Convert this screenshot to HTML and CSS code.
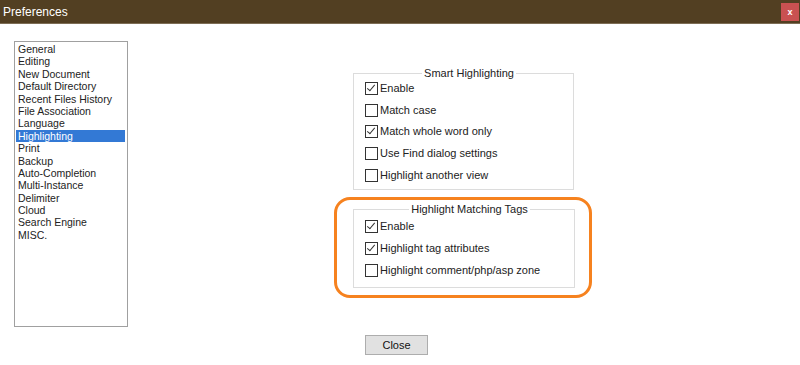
FILE: index.html
```html
<!DOCTYPE html>
<html lang="en">
<head>
    <meta charset="UTF-8">
    <title>Preferences</title>
    <link rel="stylesheet" href="styles.css">
</head>
<body>

    <div class="window">
        <header class="titlebar">
            <span class="title">Preferences</span>
            <button class="close-x">x</button>
        </header>

        <div class="dialog">
            <ul class="pages">
                <li>General</li>
                <li>Editing</li>
                <li>New Document</li>
                <li>Default Directory</li>
                <li>Recent Files History</li>
                <li>File Association</li>
                <li>Language</li>
                <li class="selected">Highlighting</li>
                <li>Print</li>
                <li>Backup</li>
                <li>Auto-Completion</li>
                <li>Multi-Instance</li>
                <li>Delimiter</li>
                <li>Cloud</li>
                <li>Search Engine</li>
                <li>MISC.</li>
            </ul>

            <div class="settings">
                <fieldset class="group smart">
                    <legend>Smart Highlighting</legend>
                    <label class="option"><span class="check on"></span>Enable</label>
                    <label class="option"><span class="check"></span>Match case</label>
                    <label class="option"><span class="check on"></span>Match whole word only</label>
                    <label class="option"><span class="check"></span>Use Find dialog settings</label>
                    <label class="option"><span class="check"></span>Highlight another view</label>
                </fieldset>

                <div class="marked">
                    <fieldset class="group tags">
                        <legend>Highlight Matching Tags</legend>
                        <label class="option"><span class="check on"></span>Enable</label>
                        <label class="option"><span class="check on"></span>Highlight tag attributes</label>
                        <label class="option"><span class="check"></span>Highlight comment/php/asp zone</label>
                    </fieldset>
                </div>
            </div>
        </div>

        <footer class="buttons">
            <button class="btn">Close</button>
        </footer>
    </div>

</body>
</html>
```

FILE: styles.css
```css
/* Preferences dialog */
body {
    margin: 0;
    background: #ffffff;
    font-family: "Liberation Sans", Arial, sans-serif;
    font-size: 11px;
    color: #000;
}
.window {
    width: 800px;
    height: 365px;
    display: flex;
    flex-direction: column;
}
.titlebar {
    height: 23px;
    background-color: #523f22;
    border-bottom: 1px solid #7d6d55;
    display: flex;
    align-items: center;
    justify-content: space-between;
    padding: 0 1px 0 3px;
}
.title {
    color: #fff;
    font-size: 12px;
}
.close-x {
    width: 18px;
    height: 18px;
    border: none;
    background-color: #c95151;
    color: #fff;
    font: bold 9px "Liberation Sans", Arial, sans-serif;
    padding: 0;
}
.dialog {
    display: flex;
    align-items: flex-start;
    padding: 17px 0 0 14px;
}

/* page list */
.pages {
    list-style: none;
    margin: 0;
    padding: 1px 1px 0 1px;
    width: 110px;
    height: 283px;
    border: 1px solid #a0a0a0;
    font-size: 10.5px;
}
.pages li {
    height: 12.4px;
    line-height: 12.4px;
    padding-left: 2px;
    white-space: nowrap;
    color: #222;
}
.pages li.selected {
    background-color: #3379d5;
    color: #fff;
    margin-right: 1px;
}

/* option groups */
.settings {
    margin-left: 206px;
    display: flex;
    flex-direction: column;
    align-items: flex-start;
}
.group {
    margin: 0;
    width: 222px;
    box-sizing: border-box;
    border: 1px solid #dcdcdc;
    padding: 2px 0 7px 11px;
    display: flex;
    flex-direction: column;
    gap: 8.7px;
}
.group legend {
    margin: 0 auto;
    padding: 0 2px;
    line-height: 13px;
    color: #222;
}
.smart {
    margin-top: 26px;
    margin-left: 19px;
    width: 221px;
}
.tags {
    padding-top: 4px;
    padding-bottom: 10px;
    gap: 9px;
}
.marked {
    margin-top: 7px;
    width: 258px;
    box-sizing: border-box;
    border: 3px solid #f6821f;
    border-radius: 16px;
    padding: 3px 14px 7px 16px;
}
.option {
    display: flex;
    align-items: center;
    height: 13px;
    line-height: 13px;
    color: #222;
    white-space: nowrap;
}
.check {
    width: 11px;
    height: 11px;
    border: 1px solid #333;
    background: #fff;
    margin-right: 2px;
    position: relative;
}
.check.on::after {
    content: "";
    position: absolute;
    left: 3px;
    top: 0px;
    width: 3px;
    height: 7px;
    border: solid #333;
    border-width: 0 1.5px 1.5px 0;
    transform: rotate(40deg);
}

/* footer */
.buttons {
    padding: 8px 0 0 365px;
}
.btn {
    width: 63px;
    height: 20px;
    background-color: #e1e1e1;
    border: 1px solid #adadad;
    font: 11px "Liberation Sans", Arial, sans-serif;
    color: #111;
    padding: 0;
}
```
